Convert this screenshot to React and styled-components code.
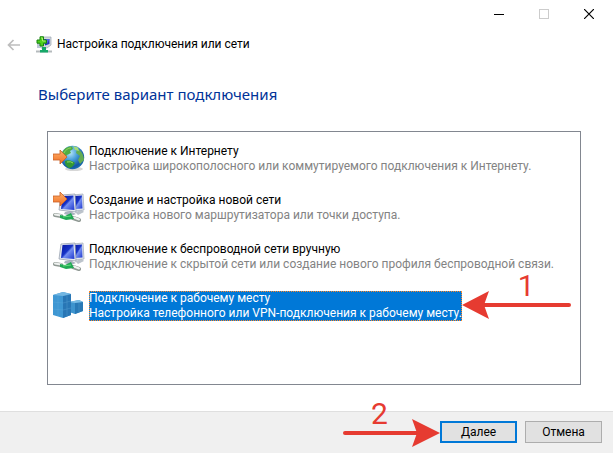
import React, { useState } from 'react'
import styled, { createGlobalStyle, css } from 'styled-components'

const GlobalStyle = createGlobalStyle`
  * {
    box-sizing: border-box;
  }

  body {
    margin: 0;
    background: #ffffff;
    font-family: Roboto, "Noto Sans", sans-serif;
    font-size: 12px;
    line-height: 15px;
    color: #000000;
  }
`

const Window = styled.div`
  display: flex;
  flex-direction: column;
  min-height: 100vh;
  overflow: hidden;
`

const TitleBar = styled.div`
  display: flex;
  justify-content: flex-end;
  padding-right: 2px;
`

const WindowButton = styled.button`
  display: grid;
  place-items: center;
  width: 45px;
  height: 28px;
  padding: 0;
  border: 0;
  background: transparent;
`

const Header = styled.header`
  display: flex;
  align-items: center;
  height: 33px;
  padding-left: 7px;
`

const BackButton = styled.button`
  display: grid;
  place-items: center;
  width: 14px;
  height: 14px;
  margin-right: 15px;
  padding: 0;
  border: 0;
  background: transparent;
`

const Title = styled.span`
  margin-left: 5px;
`

const Content = styled.main`
  flex: 1;
  display: flex;
  flex-direction: column;
  padding: 21px 32px 26px 38px;
`

const Heading = styled.h1`
  margin: 0;
  font-family: "Noto Sans", sans-serif;
  font-size: 15px;
  font-weight: normal;
  line-height: 24px;
  color: #003399;
`

const OptionList = styled.fieldset`
  flex: 1;
  display: flex;
  flex-direction: column;
  gap: 17px;
  min-width: 0;
  margin: 25px 0 0 9px;
  padding: 11px 5px;
  border: 1px solid #828790;
`

const Option = styled.label`
  display: flex;
  align-items: center;
  gap: 4px;
  height: 32px;
`

const HiddenRadio = styled.input`
  position: absolute;
  opacity: 0;
  pointer-events: none;
`

const OptionText = styled.span`
  position: relative;
  display: flex;
  flex-direction: column;
  white-space: nowrap;

  ${props => props.$selected && css`
    background: #0078d7;
    color: #ffffff;
    outline: 1px dotted #ff8728;
    outline-offset: -1px;
  `}
`

const OptionDescription = styled.span`
  color: ${props => (props.$selected ? '#ffffff' : '#838383')};
`

const Footer = styled.footer`
  display: flex;
  justify-content: flex-end;
  gap: 8px;
  padding: 9px 11px 10px;
  border-top: 1px solid #dfdfdf;
  background: #f0f0f0;
`

const ButtonSlot = styled.div`
  position: relative;
`

const DialogButton = styled.button`
  width: 77px;
  height: 22px;
  padding: 0;
  border: ${props => (props.$primary ? '2px solid #0078d7' : '1px solid #adadad')};
  background: #e1e1e1;
  font: inherit;
  color: #000000;
`

const Pointer = styled.div`
  position: absolute;
  display: flex;
  flex-direction: column;
  align-items: center;
  top: ${props => props.$top};
  ${props => (props.$side === 'right' ? css`left: 100%;` : css`right: 100%;`)}
  pointer-events: none;
`

const StepNumber = styled.span`
  font-size: 30px;
  line-height: 22px;
  margin-bottom: -6px;
  margin-left: ${props => props.$shift};
  color: #e63b31;
`

const MinimizeIcon = () => (
  <svg width="10" height="10" viewBox="0 0 10 10" shapeRendering="crispEdges">
    <path d="M0 5.5H10" stroke="#000" />
  </svg>
)

const MaximizeIcon = () => (
  <svg width="10" height="10" viewBox="0 0 10 10" shapeRendering="crispEdges">
    <path d="M.5 .5H9.5V9.5H.5Z" fill="none" stroke="#ccc" />
  </svg>
)

const CloseIcon = () => (
  <svg width="10" height="10" viewBox="0 0 10 10">
    <path d="M0 0L10 10M10 0L0 10" stroke="#000" strokeWidth="1.2" />
  </svg>
)

const BackIcon = () => (
  <svg width="14" height="12" viewBox="0 0 14 12">
    <path d="M13 6H1.8M6.5 1L1.5 6L6.5 11" fill="none" stroke="#bdbdbd" strokeWidth="1.7" />
  </svg>
)

const WizardIcon = () => (
  <svg width="16" height="18" viewBox="0 0 16 18">
    <path d="M5 1H15V9L11 12H5Z" fill="#d5dae0" stroke="#9aa3b0" strokeWidth=".7" />
    <path d="M8 3H13.5V8L9 9.5Z" fill="#2432bd" />
    <path d="M10 3H13.5L11 8Z" fill="#5364df" />
    <path d="M1 7H7V12H1Z" fill="#bcc6d6" />
    <path d="M0 15.5H16" stroke="#b5babd" strokeWidth="2" />
    <path d="M6 11H10V14H12V16.5H4V14H6Z" fill="#16a868" />
    <path d="M4 .8H7.5V4H10.5V7.2H7.5V10H4V7.2H1V4H4Z" fill="#50d11e" stroke="#16840e" />
    <path d="M5 2H6.5V5H9.5" fill="none" stroke="#a9f06c" />
  </svg>
)

const OrangeArrow = ({ x, y }) => (
  <path
    d="M0 4H7V0L14 7L7 14V10H0Z"
    transform={`translate(${x} ${y})`}
    fill="url(#orange)"
    stroke="#c95f26"
    strokeWidth=".8"
  />
)

const GlobeIcon = () => (
  <svg width="32" height="32" viewBox="0 0 32 32">
    <defs>
      <radialGradient id="globe" cx=".4" cy=".3" r=".75">
        <stop offset="0" stopColor="#b7e6fa" />
        <stop offset=".4" stopColor="#4aa0db" />
        <stop offset=".8" stopColor="#1456a3" />
        <stop offset="1" stopColor="#1c76b8" />
      </radialGradient>
      <linearGradient id="orange" x2="0" y2="1">
        <stop offset="0" stopColor="#ffb169" />
        <stop offset="1" stopColor="#ee6d24" />
      </linearGradient>
    </defs>
    <ellipse cx="21" cy="26" rx="9" ry="2" fill="#d7d7d7" />
    <circle cx="19.5" cy="14.5" r="11.7" fill="url(#globe)" />
    <path d="M9 10C11 5 15 3 19 3.5L20 6L17 8L18 10L14 12L12 15L10 14Z" fill="#53ad43" />
    <path d="M12 18C15 16 20 18 22 20C20 24 18 25 16 25C12 23 12 20 12 18Z" fill="#339735" />
    <path d="M24 6C28 7 31 12 31 17L27 21L25 17L27 13L23 10Z" fill="#65ad52" />
    <path d="M20 3L25 4.5L26 8L22 7Z" fill="#a7dc79" />
    <path d="M11 10C13 6 16 5 18 5M14 19Q18 18 20 20" stroke="#99d963" fill="none" />
    <OrangeArrow x={0} y={7} />
  </svg>
)

const ComputersIcon = ({ arrow }) => (
  <svg width="32" height="32" viewBox="0 0 32 32">
    <defs>
      <linearGradient id="screen" x2="1" y2="1">
        <stop offset="0" stopColor="#0716a0" />
        <stop offset=".45" stopColor="#1632c7" />
        <stop offset=".55" stopColor="#748ef0" />
        <stop offset="1" stopColor="#1b36cf" />
      </linearGradient>
    </defs>
    <path d="M22 20L29 18L31 20L25 23Z" fill="#bcc3cb" />
    <path d="M20 3L30 2L31 18L21 19Z" fill="#e2e7ef" stroke="#9ca6b4" strokeWidth=".7" />
    <path d="M21 4L29 3.5L29.5 16.5L22 17Z" fill="url(#screen)" />
    <path d="M12 20L17 19L23 22L18 24L11 22Z" fill="#aab3bf" />
    <path d="M8 3L22 2L23 20L6 18Z" fill="#e8ebf1" stroke="#8b96a6" strokeWidth=".7" />
    <path d="M9.5 4L20.5 3.5L21.5 18L8 17Z" fill="url(#screen)" />
    <path d="M2 23L8 24M20 26L26 28" fill="none" stroke="#8f9893" strokeWidth="4" strokeLinecap="round" />
    <path d="M2 22.5L8 23.5M21 25.5L26 27.5" fill="none" stroke="#eef1ef" strokeWidth="2" strokeLinecap="round" />
    <path d="M7 23L12 24L18 21L21 27L13 28L7 26Z" fill="#20a953" />
    <path d="M10 25L18 24" stroke="#66dc7f" />
    {arrow && <OrangeArrow x={0} y={0} />}
  </svg>
)

const WorkplaceIcon = () => (
  <svg width="32" height="32" viewBox="0 0 32 32">
    <path d="M16 12L26 10L30 12V21L22 24L16 22Z" fill="#3d94ce" />
    <path d="M22 13L30 12V21L22 24Z" fill="#2879b6" />
    <path d="M16 12L26 10L30 12L22 13Z" fill="#78bce5" />
    <path d="M0 5L10 2L18 4V25L10 28L0 25Z" fill="#3f97d3" />
    <path d="M10 6L18 4V25L10 28Z" fill="#2876b5" />
    <path d="M0 5L10 2L18 4L10 6Z" fill="#72b6e2" />
    <path
      d="M0 12L10 13L18 11M0 19L10 20L18 18M5 5V26M14 5V26M26 13V22"
      fill="none"
      stroke="#68addd"
      strokeWidth=".5"
      opacity=".6"
    />
  </svg>
)

const ArrowLeft = () => (
  <svg width="109" height="28" viewBox="0 0 109 28">
    <path d="M20 14H107" stroke="#e63b31" strokeWidth="4" strokeLinecap="round" />
    <path d="M0 14L27 0L22 14L27 28Z" fill="#e63b31" />
  </svg>
)

const ArrowRight = () => (
  <svg width="97" height="28" viewBox="0 0 97 28">
    <path d="M2 14H77" stroke="#e63b31" strokeWidth="4" strokeLinecap="round" />
    <path d="M97 14L69 0L74 14L69 28Z" fill="#e63b31" />
  </svg>
)

const options = [
  {
    id: 'internet',
    icon: <GlobeIcon />,
    title: 'Подключение к Интернету',
    description: 'Настройка широкополосного или коммутируемого подключения к Интернету.',
  },
  {
    id: 'network',
    icon: <ComputersIcon arrow />,
    title: 'Создание и настройка новой сети',
    description: 'Настройка нового маршрутизатора или точки доступа.',
  },
  {
    id: 'wireless',
    icon: <ComputersIcon />,
    title: 'Подключение к беспроводной сети вручную',
    description: 'Подключение к скрытой сети или создание нового профиля беспроводной связи.',
  },
  {
    id: 'workplace',
    icon: <WorkplaceIcon />,
    title: 'Подключение к рабочему месту',
    description: 'Настройка телефонного или VPN-подключения к рабочему месту.',
    step: '1',
  },
]

const App = () => {
  const [selected, setSelected] = useState('workplace')

  return (
    <Window>
      <GlobalStyle />
      <TitleBar>
        <WindowButton aria-label="Свернуть"><MinimizeIcon /></WindowButton>
        <WindowButton aria-label="Развернуть" disabled><MaximizeIcon /></WindowButton>
        <WindowButton aria-label="Закрыть"><CloseIcon /></WindowButton>
      </TitleBar>
      <Header>
        <BackButton aria-label="Назад" disabled><BackIcon /></BackButton>
        <WizardIcon />
        <Title>Настройка подключения или сети</Title>
      </Header>
      <Content>
        <Heading id="heading">Выберите вариант подключения</Heading>
        <OptionList aria-labelledby="heading">
          {options.map(({ id, icon, title, description, step }) => (
            <Option key={id}>
              <HiddenRadio
                type="radio"
                name="connection"
                checked={selected === id}
                onChange={() => setSelected(id)}
              />
              {icon}
              <OptionText $selected={selected === id}>
                <span>{title}</span>
                <OptionDescription $selected={selected === id}>{description}</OptionDescription>
                {step && (
                  <Pointer $side="right" $top="-16px">
                    <StepNumber $shift="20px">{step}</StepNumber>
                    <ArrowLeft />
                  </Pointer>
                )}
              </OptionText>
            </Option>
          ))}
        </OptionList>
      </Content>
      <Footer>
        <ButtonSlot>
          <DialogButton $primary>Далее</DialogButton>
          <Pointer $side="left" $top="-18px">
            <StepNumber $shift="-24px">2</StepNumber>
            <ArrowRight />
          </Pointer>
        </ButtonSlot>
        <DialogButton>Отмена</DialogButton>
      </Footer>
    </Window>
  )
}

export default App
